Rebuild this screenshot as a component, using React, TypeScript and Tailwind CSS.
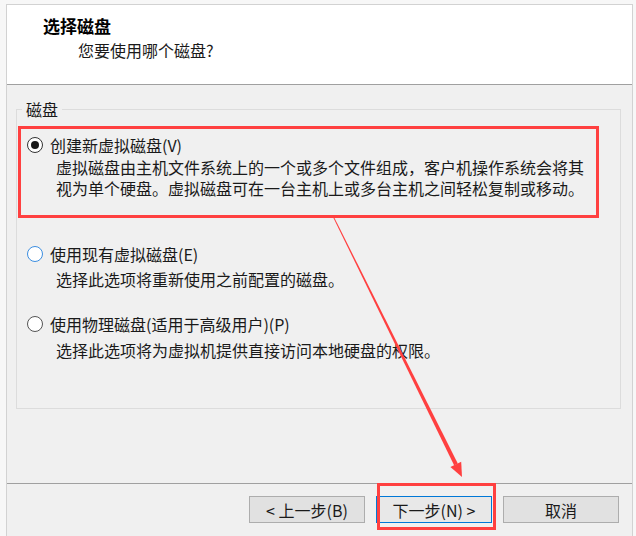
import React from 'react';

interface DiskOption {
    id: string;
    label: string;
    lines: string[];
    state: 'checked' | 'hover' | 'normal';
    labelTop: string;
    descTop: string;
}

const options: DiskOption[] = [
    {
        id: 'new',
        label: '创建新虚拟磁盘(V)',
        lines: [
            '虚拟磁盘由主机文件系统上的一个或多个文件组成，客户机操作系统会将其',
            '视为单个硬盘。虚拟磁盘可在一台主机上或多台主机之间轻松复制或移动。',
        ],
        state: 'checked',
        labelTop: 'mt-0',
        descTop: 'mt-[2px]',
    },
    {
        id: 'existing',
        label: '使用现有虚拟磁盘(E)',
        lines: ['选择此选项将重新使用之前配置的磁盘。'],
        state: 'hover',
        labelTop: 'mt-[45px]',
        descTop: 'mt-[5px]',
    },
    {
        id: 'physical',
        label: '使用物理磁盘(适用于高级用户)(P)',
        lines: ['选择此选项将为虚拟机提供直接访问本地硬盘的权限。'],
        state: 'normal',
        labelTop: 'mt-[24px]',
        descTop: 'mt-[6px]',
    },
];

const Radio: React.FC<{ state: DiskOption['state'] }> = ({ state }) => {
    const ring =
        state === 'checked'
            ? 'border-[#333333]'
            : state === 'hover'
            ? 'border-[#3c8ee0]'
            : 'border-[#555555]';
    return (
        <span className={`w-[16px] h-[16px] rounded-full border bg-white flex items-center justify-center shrink-0 ${ring}`}>
            {state === 'checked' && <span className="w-[8px] h-[8px] rounded-full bg-[#1a1a1a]"></span>}
        </span>
    );
};

const App: React.FC = () => {
    return (
        <div
            className="relative w-[636px] h-[536px] overflow-hidden bg-[#f7f7f7] pt-[4px] pl-[6px] pr-[3px] text-[#1a1a1a]"
            style={{ fontFamily: '"Noto Sans CJK SC", "Noto Sans", sans-serif' }}
        >
            <div className="h-[540px] border-t border-l border-r border-[#d2d2d2] bg-[#f0f0f0] flex flex-col">
                {/* Header */}
                <div className="h-[80px] bg-white border-b border-[#a0a0a0] pt-[11px] shrink-0">
                    <p className="pl-[36px] text-[17px] leading-[20px] font-bold text-black">选择磁盘</p>
                    <p className="pl-[71px] mt-[4px] text-[16px] leading-[20px]">您要使用哪个磁盘?</p>
                </div>

                {/* Body */}
                <div className="h-[398px] shrink-0 pl-[9px] pr-[11px] pt-[14px]">
                    <fieldset className="border border-[#dcdcdc] px-[10px] pt-[16px] pb-[47px]">
                        <legend className="ml-[-5px] px-[4px] text-[16px] leading-[20px]">磁盘</legend>
                        {options.map((opt) => (
                            <div key={opt.id} className={opt.labelTop}>
                                <div className="flex items-center gap-[7px] h-[20px]">
                                    <Radio state={opt.state} />
                                    <span className="text-[16px] leading-[20px]">{opt.label}</span>
                                </div>
                                <div className={`pl-[29px] ${opt.descTop}`}>
                                    {opt.lines.map((line) => (
                                        <p key={line} className="text-[16px] leading-[21px] whitespace-nowrap">
                                            {line}
                                        </p>
                                    ))}
                                </div>
                            </div>
                        ))}
                    </fieldset>
                </div>

                {/* Footer */}
                <div className="border-t border-[#a0a0a0] flex justify-end gap-[11px] pr-[13px] pt-[12px]">
                    <button className="w-[116px] h-[27px] bg-[#e1e1e1] border border-[#adadad] text-[16px] leading-[20px]">
                        &lt; 上一步(B)
                    </button>
                    <button className="w-[116px] h-[27px] bg-[#e8e8e8] border border-[#0078d7] text-[16px] leading-[20px]">
                        下一步(N) &gt;
                    </button>
                    <button className="w-[116px] h-[27px] bg-[#e1e1e1] border border-[#adadad] text-[16px] leading-[20px]">
                        取消
                    </button>
                </div>
            </div>

            {/* Annotations */}
            <div className="absolute left-[18px] top-[126px] w-[581px] h-[92px] border-[3px] border-[#ff4040] pointer-events-none"></div>
            <div className="absolute left-[377px] top-[483px] w-[119px] h-[47px] border-[3px] border-[#ff4040] pointer-events-none"></div>
            <svg className="absolute left-0 top-0 pointer-events-none" width="636" height="536" viewBox="0 0 636 536">
                <polygon points="332.6,216.2 333.4,215.8 457.8,463.6 454.2,465.4" fill="#ff4040" />
                <polygon points="462,477 450.4,467.1 461.2,461.7" fill="#ff4040" />
            </svg>
        </div>
    );
};

export default App;
